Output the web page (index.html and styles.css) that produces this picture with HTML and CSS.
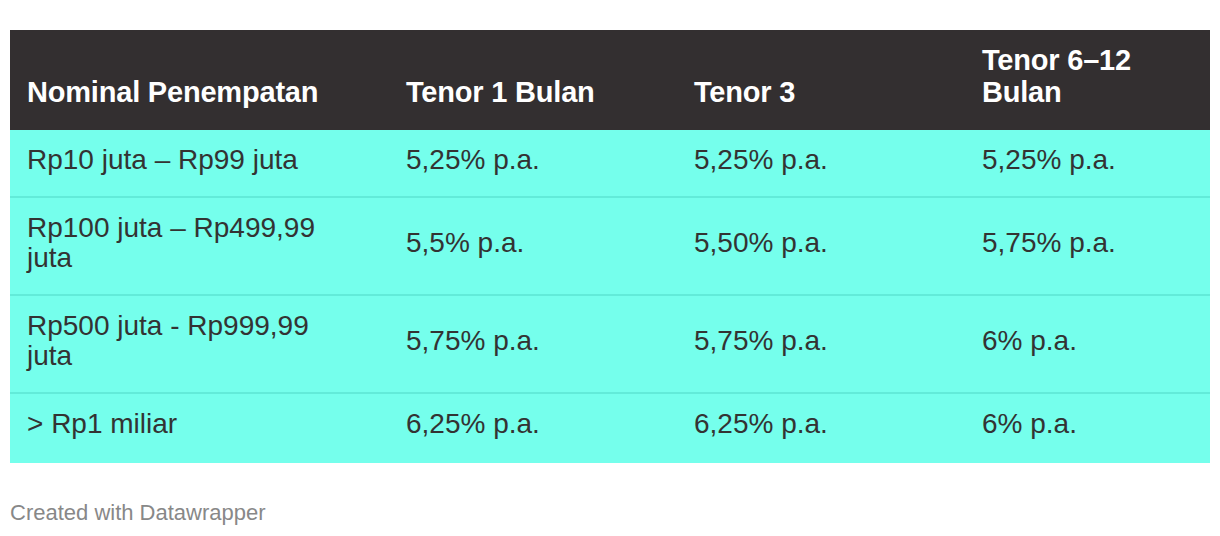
FILE: index.html
```html
<!DOCTYPE html>
<html lang="id">
<head>
<meta charset="utf-8">
<title>Tabel Bunga Deposito</title>
<link rel="stylesheet" href="styles.css">
</head>
<body>
<div class="chart">
  <table class="rates">
    <colgroup>
      <col class="c1"><col class="c2"><col class="c3"><col class="c4">
    </colgroup>
    <thead>
      <tr>
        <th>Nominal Penempatan</th>
        <th>Tenor 1 Bulan</th>
        <th>Tenor 3</th>
        <th>Tenor 6–12 Bulan</th>
      </tr>
    </thead>
    <tbody>
      <tr>
        <td>Rp10 juta – Rp99 juta</td>
        <td>5,25% p.a.</td>
        <td>5,25% p.a.</td>
        <td>5,25% p.a.</td>
      </tr>
      <tr>
        <td>Rp100 juta – Rp499,99 juta</td>
        <td>5,5% p.a.</td>
        <td>5,50% p.a.</td>
        <td>5,75% p.a.</td>
      </tr>
      <tr>
        <td>Rp500 juta - Rp999,99 juta</td>
        <td>5,75% p.a.</td>
        <td>5,75% p.a.</td>
        <td>6% p.a.</td>
      </tr>
      <tr>
        <td>&gt; Rp1 miliar</td>
        <td>6,25% p.a.</td>
        <td>6,25% p.a.</td>
        <td>6% p.a.</td>
      </tr>
    </tbody>
  </table>
  <p class="credit">Created with Datawrapper</p>
</div>
</body>
</html>
```

FILE: styles.css
```css
html, body {
  margin: 0;
  padding: 0;
  background: #ffffff;
}

body {
  font-family: "Liberation Sans", Helvetica, Arial, sans-serif;
  color: #333333;
}

.chart {
  padding: 30px 10px 0 10px;
}

.rates {
  width: 1200px;
  table-layout: fixed;
  border-collapse: collapse;
  border-spacing: 0;
}

.c1 { width: 379px; }
.c2 { width: 288px; }
.c3 { width: 288px; }
.c4 { width: 245px; }

.rates thead tr {
  height: 100px;
  background: #332f30;
}

.rates th {
  text-align: left;
  vertical-align: bottom;
  color: #ffffff;
  font-weight: bold;
  font-size: 29px;
  line-height: 32px;
  letter-spacing: -0.2px;
  padding: 0 40px 22px 17px;
}

.rates tbody tr {
  background: #75ffec;
}

.rates td {
  font-size: 28px;
  line-height: 30px;
  vertical-align: middle;
  padding: 15px 40px 21px 17px;
  border-bottom: 2px solid #62ebd9;
  color: #333333;
}

.rates tbody tr:last-child td {
  border-bottom: none;
  padding-bottom: 24px;
}

.credit {
  margin: 37px 0 0 0;
  font-size: 22px;
  line-height: 26px;
  color: #888888;
}
```
